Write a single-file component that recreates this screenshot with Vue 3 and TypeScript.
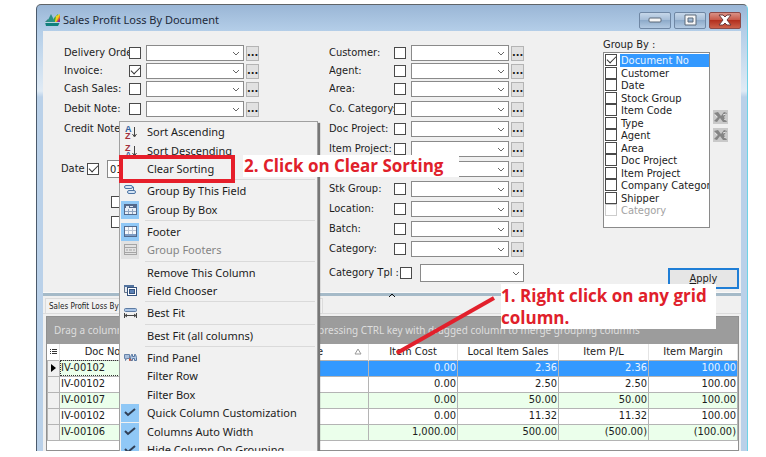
<script setup lang="ts">
interface Field {
  label: string
  checked?: boolean
}

interface MenuItem {
  text?: string
  icon?: string
  active?: boolean
  disabled?: boolean
}

interface Row {
  doc: string
  cost: string
  sales: string
  pl: string
  margin: string
}

const documentFields: Field[] = [
  { label: 'Delivery Order:' },
  { label: 'Invoice:', checked: true },
  { label: 'Cash Sales:' },
  { label: 'Debit Note:' },
  { label: 'Credit Note:' },
]

const filterFields: Field[] = [
  { label: 'Customer:' },
  { label: 'Agent:' },
  { label: 'Area:' },
  { label: 'Co. Category:' },
  { label: 'Doc Project:' },
  { label: 'Item Project:' },
  { label: 'Shipper:' },
  { label: 'Stk Group:' },
  { label: 'Location:' },
  { label: 'Batch:' },
  { label: 'Category:' },
]

const groups: string[] = [
  'Document No', 'Customer', 'Date', 'Stock Group', 'Item Code', 'Type', 'Agent',
  'Area', 'Doc Project', 'Item Project', 'Company Category', 'Shipper', 'Category',
]

// An entry without text is a separator.
const menu: MenuItem[] = [
  { text: 'Sort Ascending', icon: 'az' },
  { text: 'Sort Descending', icon: 'za' },
  { text: 'Clear Sorting' },
  {},
  { text: 'Group By This Field', icon: 'field' },
  { text: 'Group By Box', icon: 'box', active: true },
  {},
  { text: 'Footer', icon: 'footer', active: true },
  { text: 'Group Footers', icon: 'gfooter', disabled: true },
  {},
  { text: 'Remove This Column' },
  { text: 'Field Chooser', icon: 'chooser' },
  {},
  { text: 'Best Fit', icon: 'fit' },
  {},
  { text: 'Best Fit (all columns)' },
  {},
  { text: 'Find Panel', icon: 'find' },
  { text: 'Filter Row' },
  { text: 'Filter Box' },
  { text: 'Quick Column Customization', icon: 'check', active: true },
  { text: 'Columns Auto Width', icon: 'check', active: true },
  { text: 'Hide Column On Grouping', icon: 'check', active: true },
]

const rows: Row[] = [
  { doc: 'IV-00102', cost: '0.00', sales: '2.36', pl: '2.36', margin: '100.00' },
  { doc: 'IV-00102', cost: '0.00', sales: '2.50', pl: '2.50', margin: '100.00' },
  { doc: 'IV-00107', cost: '0.00', sales: '50.00', pl: '50.00', margin: '100.00' },
  { doc: 'IV-00102', cost: '0.00', sales: '11.32', pl: '11.32', margin: '100.00' },
  { doc: 'IV-00106', cost: '1,000.00', sales: '500.00', pl: '(500.00)', margin: '(100.00)' },
]
</script>

<template>
  <div class="desktop">
    <main class="window">
      <header class="titlebar">
        <svg class="logo" viewBox="0 0 16 12" aria-hidden="true">
          <path d="M0 8 3 5 6 8z" fill="#35827c" />
          <path d="M8 8 9 4l4-4 1 8z" fill="#3aa83c" />
          <path d="M10 8 11 2l4-2v8z" fill="#f0d020" />
          <path d="M11 8 15 1v7z" fill="#e0702a" />
          <path d="M12 8 15 4v4z" fill="#8a2aa0" />
          <path d="M2 8 6 0l4 8z" fill="#2b8f86" />
          <path d="M0 8h15l-2 4H1z" fill="#11807c" />
          <path d="M0 8.500h15" stroke="#b9d3e0" stroke-width="1" />
        </svg>
        <h1>Sales Profit Loss By Document</h1>
        <div class="controls">
          <button type="button" class="ctl" aria-label="Minimize">
            <svg viewBox="0 0 16 12"><rect x="2" y="4" width="12" height="4" rx="1" fill="#f6f6f6" stroke="#5b6878" /></svg>
          </button>
          <button type="button" class="ctl" aria-label="Maximize">
            <svg viewBox="0 0 16 12"><path d="M3 1h11v10H3z M6 4v4h5V4z" fill="#f6f6f6" fill-rule="evenodd" stroke="#5b6878" /></svg>
          </button>
          <button type="button" class="ctl close" aria-label="Close">
            <svg viewBox="0 0 16 12"><path d="M2 1h4l2 2 2-2h4l-4 5 4 5h-4L8 9l-2 2H2l4-5z" fill="#fff" stroke="#6b3a3c" /></svg>
          </button>
        </div>
      </header>

      <div class="client">
        <form class="filters" @submit.prevent>
          <div class="column">
            <div v-for="(f, i) in documentFields" :key="f.label" class="field" :class="{ spaced: i > 2 }">
              <label :for="'doc' + i">{{ f.label }}</label>
              <input :id="'doc' + i" type="checkbox" :checked="f.checked">
              <span class="combo">
                <select :aria-label="f.label"><option></option></select>
                <svg viewBox="0 0 8 5"><path d="M1 1l3 3 3-3" /></svg>
              </span>
              <button type="button" class="more">...</button>
            </div>
            <div class="date">
              <label for="date">Date</label>
              <input id="date" type="checkbox" checked>
              <input type="text" value="01/01/2017" aria-label="From date">
            </div>
            <div class="extras">
              <input type="checkbox" aria-label="Option one">
              <input type="checkbox" aria-label="Option two">
            </div>
          </div>

          <div class="column">
            <div v-for="(f, i) in filterFields" :key="f.label" class="field" :class="{ spaced: i > 2 }">
              <label :for="'flt' + i">{{ f.label }}</label>
              <input :id="'flt' + i" type="checkbox">
              <span class="combo">
                <select :aria-label="f.label"><option></option></select>
                <svg viewBox="0 0 8 5"><path d="M1 1l3 3 3-3" /></svg>
              </span>
              <button type="button" class="more">...</button>
            </div>
            <div class="field template">
              <label for="tpl">Category Tpl :</label>
              <input id="tpl" type="checkbox">
              <span class="combo">
                <select aria-label="Category template"><option></option></select>
                <svg viewBox="0 0 8 5"><path d="M1 1l3 3 3-3" /></svg>
              </span>
            </div>
          </div>

          <div class="grouping">
            <span class="caption">Group By :</span>
            <div class="picker">
              <ul>
                <li v-for="(g, i) in groups" :key="g">
                  <input :id="'grp' + i" type="checkbox" :checked="i === 0" :disabled="i === 12">
                  <label :for="'grp' + i" :class="{ selected: i === 0, off: i === 12 }">{{ g }}</label>
                </li>
              </ul>
              <div class="tools">
                <button v-for="n in 2" :key="n" type="button" :aria-label="n === 1 ? 'Check all' : 'Uncheck all'">
                  <svg viewBox="0 0 15 14">
                    <path d="M1 3l4-1 3 4 3-4 3 1-3 4 3 5-4 0-3-4-3 4-3-1 4-4z" fill="#858585" />
                    <path d="M2 5l2 2M11 9l2 1M10 5l3-1" stroke="#e4e4e4" />
                  </svg>
                </button>
              </div>
            </div>
            <button type="submit" class="apply"><u>A</u>pply</button>
          </div>
        </form>

        <div class="splitter">
          <svg viewBox="0 0 8 5"><path d="M1 4l3-3 3 3" /></svg>
        </div>

        <nav class="tabs">
          <button type="button" class="tab">Sales Profit Loss By Document</button>
        </nav>

        <section class="grid">
          <p class="groupbox">
            <span class="lead">Drag a column header here to group by that column or</span>
            <span>pressing CTRL key with dragged column to merge grouping columns</span>
          </p>
          <table>
            <colgroup>
              <col class="c-mark"><col class="c-doc"><col>
              <col class="c-cost"><col class="c-sales"><col class="c-pl"><col class="c-margin">
            </colgroup>
            <thead>
              <tr>
                <th>
                  <svg class="lines" viewBox="0 0 7 7"><path d="M0 1.500h1M2 1.500h5M0 3.500h1M2 3.500h5M0 5.500h1M2 5.500h5" /></svg>
                </th>
                <th>Doc No</th>
                <th class="name">
                  <span>Date</span>
                  <svg viewBox="0 0 8 7"><path d="M4 1l3 5H1z" /></svg>
                </th>
                <th>Item Cost</th>
                <th>Local Item Sales</th>
                <th>Item P/L</th>
                <th>Item Margin</th>
              </tr>
            </thead>
            <tbody>
              <tr v-for="(r, i) in rows" :key="i" :class="{ current: i === 0 }">
                <td class="mark"><svg v-if="i === 0" viewBox="0 0 5 8"><path d="M0 0l5 4-5 4z" /></svg></td>
                <td class="doc">{{ r.doc }}</td>
                <td></td>
                <td>{{ r.cost }}</td>
                <td>{{ r.sales }}</td>
                <td>{{ r.pl }}</td>
                <td>{{ r.margin }}</td>
              </tr>
            </tbody>
          </table>
        </section>
      </div>

      <div class="menu" role="menu">
        <template v-for="(m, i) in menu" :key="i">
          <hr v-if="!m.text">
          <button v-else type="button" role="menuitem" :disabled="m.disabled">
            <span class="glyph" :class="{ active: m.active, dim: m.disabled }">
              <svg v-if="m.icon === 'az' || m.icon === 'za'" viewBox="0 0 16 16">
                <text x="3" y="8" :fill="m.icon === 'az' ? '#2f5f9e' : '#a3303c'">{{ m.icon === 'az' ? 'A' : 'Z' }}</text>
                <text x="3" y="15" :fill="m.icon === 'az' ? '#a3303c' : '#2f5f9e'">{{ m.icon === 'az' ? 'Z' : 'A' }}</text>
                <path d="M12.500 3v9M10.500 10l2 3 2-3" fill="none" stroke="#444" />
              </svg>
              <svg v-else-if="m.icon === 'field'" viewBox="0 0 16 16" fill="#d5e5f6" stroke="#4c74a4">
                <rect x="2.500" y="2.500" width="8" height="3" rx="1.500" />
                <rect x="5.500" y="7.500" width="8" height="3" rx="1.500" />
                <path d="M10.500 4h1v3.500" fill="none" />
              </svg>
              <svg v-else-if="m.icon === 'box'" viewBox="0 0 16 16">
                <rect x="2.500" y="2.500" width="12" height="10" fill="#e9eff7" stroke="#53698c" />
                <path d="M3 3h11v3H3z" fill="#53698c" />
                <path d="M4 4h3v2H4zM8 4h3v1H8z" fill="#dfe9f5" />
                <path d="M3 9.500h11M6.500 7v5M10.500 7v5" stroke="#8fa3c0" />
              </svg>
              <svg v-else-if="m.icon === 'footer'" viewBox="0 0 16 16">
                <rect x="2.500" y="2.500" width="12" height="10" fill="#f7f9fc" stroke="#53698c" />
                <path d="M6.500 3v7M10.500 3v7M3 6.500h11" stroke="#b9c4d4" />
                <path d="M3 10h11v2H3z" fill="#7d9cc4" />
              </svg>
              <svg v-else-if="m.icon === 'gfooter'" viewBox="0 0 16 16" fill="none" stroke="#a5a5a5">
                <rect x="2.500" y="2.500" width="12" height="10" />
                <path d="M3 5.500h11M3 10.500h11M4 8h2M7 8h3M11 8h2" />
              </svg>
              <svg v-else-if="m.icon === 'chooser'" viewBox="0 0 16 16">
                <path d="M2.500 2.500h9v7h-9z" fill="#e6ebf2" stroke="#68778c" />
                <path d="M2 2h10v2H2z" fill="#54749f" />
                <rect x="5.500" y="4.500" width="9" height="8" fill="#fff" stroke="#36547f" />
                <rect x="7.500" y="6.500" width="5" height="4" fill="#5d82b5" stroke="#36547f" />
              </svg>
              <svg v-else-if="m.icon === 'fit'" viewBox="0 0 16 16">
                <rect x="2.500" y="3.500" width="12" height="3" rx="1" fill="#a9c4e6" stroke="#5d7ba3" />
                <path d="M2.500 8v5M14.500 8v5M3 10.500h11M5 9l-2 1.500L5 12M12 9l2 1.500-2 1.500" fill="none" stroke="#444" />
              </svg>
              <svg v-else-if="m.icon === 'find'" viewBox="0 0 16 16">
                <path d="M2.500 4.500h5v4h-3l-1 2v-2h-1z" fill="#a9bfdc" stroke="#6783a8" />
                <path d="M8.500 10.500v-3l1-3h1v2h2v-2h1l1 3v3h-2v-2h-2v2z" fill="#b8cce6" stroke="#5777a1" />
                <path d="M7 8l3 2-3 1z" fill="#c2563e" />
              </svg>
              <svg v-else-if="m.icon === 'check'" viewBox="0 0 16 16">
                <path d="M3 7l3 3 7-6" fill="none" stroke="#303f55" stroke-width="2" />
              </svg>
            </span>
            <span>{{ m.text }}</span>
          </button>
        </template>
      </div>

      <svg class="pointer" viewBox="0 0 100 60" aria-hidden="true"><path d="M98 3L1 58" /></svg>
      <div class="highlight"></div>
      <p class="note step-two">2. Click on Clear Sorting</p>
      <p class="note step-one">1. Right click on any grid column.</p>
    </main>
  </div>
</template>

<style>
body {
  margin: 0;
  background: #fff;
}
</style>

<style scoped>
* {
  box-sizing: border-box;
}

.desktop {
  height: 100vh;
  padding: 4px 18px 6px 36px;
  font: 11px/14px "DejaVu Sans Condensed", "DejaVu Sans", sans-serif;
  color: #1c1c1c;
}

button,
input,
select {
  margin: 0;
  padding: 0;
  font: inherit;
  color: inherit;
}

.window {
  position: relative;
  display: flex;
  flex-direction: column;
  height: 100%;
  overflow: hidden;
  border-top: 1px solid #5f6468;
  border-left: 1px solid #4a5a6c;
  border-right: 1px solid #6fd3e6;
  border-radius: 5px 5px 0 0;
  background: linear-gradient(#9ab6d6, #b4cee8 26px, #e0ebf5 86px, #bad1e9 92px);
}

.titlebar {
  display: flex;
  align-items: center;
  height: 26px;
  padding: 0 6px 0 8px;
}

.logo {
  width: 16px;
  height: 12px;
  margin-top: 4px;
}

h1 {
  flex: 1;
  margin: 4px 0 0 2px;
  font: 11px/16px "Noto Sans", sans-serif;
  color: #1d2a3a;
}

.controls {
  display: flex;
  gap: 3px;
  padding-top: 4px;
}

.ctl {
  display: grid;
  place-items: center;
  width: 32px;
  height: 17px;
  border: 1px solid #6f87a4;
  border-radius: 2px;
  background: linear-gradient(#c6d7e9, #a3bbd6 50%, #8eabca 50%, #b3cae2);
}

.ctl svg {
  width: 16px;
  height: 12px;
}

.close {
  border-color: #8c4a48;
  background: linear-gradient(#d99185, #c65443 50%, #b3301f 50%, #cb604a);
}

.client {
  display: flex;
  flex: 1;
  flex-direction: column;
  min-height: 0;
  margin: 0 6px;
  background: #f0f0f0;
}

.filters {
  display: grid;
  grid-template-columns: 265fr 274fr 136fr;
  padding: 14px 2px 3px 21px;
}

.column {
  display: flex;
  flex-direction: column;
  gap: 2px;
}

.field {
  display: flex;
  align-items: center;
  height: 16px;
}

.field.spaced {
  margin-top: 2px;
}

.field label {
  width: 65px;
  overflow: hidden;
  line-height: 16px;
  white-space: nowrap;
}

.combo {
  display: grid;
  align-items: center;
  width: 98px;
  height: 16px;
  margin: 0 2px 0 5px;
}

.combo select,
.combo svg {
  grid-area: 1 / 1;
}

.combo select {
  width: 100%;
  height: 100%;
  appearance: none;
  border: 1px solid #8a8a8a;
  border-radius: 0;
  background: #fff;
}

.combo svg {
  justify-self: end;
  width: 8px;
  height: 5px;
  margin-right: 4px;
  pointer-events: none;
}

.combo path {
  fill: none;
  stroke: #666;
}

.splitter path {
  fill: none;
  stroke: #111;
}

.more {
  width: 13px;
  height: 15px;
  border: 1px solid #b4b4b4;
  background: #e1e1e1;
  font-weight: 700;
  line-height: 12px;
  text-align: center;
}

input[type="checkbox"] {
  display: grid;
  place-items: center;
  flex: none;
  width: 12px;
  height: 12px;
  appearance: none;
  border: 1px solid #4a4a4a;
  background: #fff;
}

input[type="checkbox"]:checked::after {
  content: "";
  width: 8px;
  height: 4px;
  margin-bottom: 3px;
  border-bottom: 1px solid #333;
  border-left: 1px solid #333;
  transform: rotate(-45deg);
}

input[type="checkbox"]:disabled {
  border-color: #ccc;
}

.template {
  height: 18px;
  margin-top: 5px;
}

.template label {
  width: 71px;
}

.template .combo {
  width: 104px;
  height: 18px;
  margin-left: 8px;
}

.date {
  display: flex;
  align-items: center;
  height: 18px;
  margin: 21px 0 0 -3px;
}

.date label {
  width: 26px;
}

.date input[type="text"] {
  width: 80px;
  height: 18px;
  margin-left: 8px;
  padding-left: 2px;
  border: 1px solid #8a8a8a;
  background: #fff;
}

.extras {
  display: grid;
  gap: 8px;
  margin: 16px 0 0 47px;
}

.grouping {
  display: flex;
  flex-direction: column;
  margin-top: -8px;
}

.caption {
  line-height: 15px;
}

.picker {
  display: flex;
  gap: 3px;
}

.picker ul {
  width: 107px;
  height: 176px;
  margin: 0;
  padding: 1px 0 1px 1px;
  overflow: hidden;
  border: 1px solid #8a8a8a;
  background: #fff;
  list-style: none;
}

.picker li {
  display: grid;
  grid-template-columns: 12px 1fr;
  gap: 3px;
  height: 13px;
}

.picker li:nth-child(even) {
  height: 12px;
}

.picker li label {
  padding-left: 1px;
  overflow: hidden;
  line-height: 13px;
  white-space: nowrap;
}

.picker .selected {
  background: #3399ff;
  color: #e8f4ff;
}

.picker .off {
  color: #a2a2a2;
}

.tools {
  display: flex;
  flex-direction: column;
  gap: 4px;
  padding-top: 58px;
}

.tools button {
  display: block;
  width: 15px;
  height: 14px;
  border: 0;
  background: #c9c9c9;
}

.tools svg {
  display: block;
}

.apply {
  align-self: flex-end;
  width: 71px;
  height: 21px;
  margin-top: 40px;
  border: 2px solid #1f7ed6;
  background: #e6e6e6;
  line-height: 16px;
}

.splitter {
  display: grid;
  place-items: center;
  height: 4px;
  border-top: 1px solid #f9f9f9;
  background: #a5bac8;
}

.splitter svg {
  width: 8px;
  height: 5px;
}

.tabs {
  display: flex;
  height: 18px;
  padding: 2px 2px 0;
  border-bottom: 1px solid #dcdcdc;
}

.tab {
  width: 278px;
  border: 1px solid #dcdcdc;
  border-bottom: 0;
  background: #f2f2f2;
  padding: 2px 3px 0;
  font: 8px/12px "DejaVu Sans Condensed", sans-serif;
  text-align: left;
}

.grid {
  flex: 1;
  margin: 2px 2px 0 3px;
  border: 1px solid #909090;
  background: #fff;
}

.groupbox {
  display: flex;
  align-items: center;
  height: 27px;
  margin: 0;
  padding: 0 0 2px 7px;
  background: #9c9c9c;
  color: #dedede;
  font: 10px/14px "Noto Sans", sans-serif;
  white-space: nowrap;
}

.lead {
  width: 264px;
  overflow: hidden;
}

table {
  width: 100%;
  table-layout: fixed;
  border-collapse: collapse;
}

.c-mark { width: 12px; }
.c-doc { width: 86px; }
.c-cost { width: 89px; }
.c-sales { width: 101px; }
.c-pl { width: 90px; }
.c-margin { width: 89px; }

th {
  height: 16px;
  padding: 0;
  border-right: 1px solid #e4e4e4;
  font-weight: 400;
  text-align: center;
  white-space: nowrap;
}

.lines {
  display: block;
  width: 7px;
  height: 7px;
  margin: 0 auto;
  stroke: #333;
}

.name span {
  display: inline-block;
  margin-right: 31px;
}

.name {
  padding-right: 6px;
  text-align: right;
}

.name svg {
  width: 8px;
  height: 7px;
  fill: none;
  stroke: #999;
}

td {
  height: 16px;
  padding: 0 1px;
  border: 1px solid #b4b4b4;
  line-height: 14px;
  text-align: right;
}

tbody tr:nth-child(odd) {
  background: #ebffeb;
}

tbody tr.current {
  background: #3399ff;
  color: #e8f4ff;
}

td.mark {
  background: #f0f0f0;
}

.mark svg {
  display: block;
  width: 5px;
  height: 8px;
  margin: 0 auto;
}

td.doc {
  text-align: left;
}

tbody tr.current .doc {
  outline: 1px dotted #333;
  outline-offset: -1px;
  background: #ebffeb;
  color: #1c1c1c;
}

.menu {
  position: absolute;
  top: 116px;
  left: 82px;
  display: flex;
  flex-direction: column;
  width: 199px;
  height: 340px;
  padding: 1px;
  border: 1px solid #a0a0a0;
  background: #f1f1f1;
  box-shadow: 2px 2px 1px #777;
  font: 11px/16px "Noto Sans", sans-serif;
}

.menu button {
  display: flex;
  flex: 1;
  align-items: center;
  gap: 8px;
  min-height: 0;
  border: 0;
  background: none;
  text-align: left;
  white-space: nowrap;
}

.menu button:disabled {
  color: #858585;
}

.menu hr {
  width: 170px;
  height: 4px;
  margin: 0 0 0 24px;
  border: 0;
  background: linear-gradient(transparent 1px, #dadada 1px, #dadada 2px, transparent 2px);
}

.glyph {
  display: grid;
  place-items: center;
  flex: none;
  width: 18px;
  height: 18px;
}

.glyph.active {
  background: #90c8f6;
}

.glyph.dim {
  background: #e2e2e2;
}

.glyph svg {
  width: 16px;
  height: 16px;
}

.glyph text {
  font: bold 9px "Liberation Sans", sans-serif;
}

.pointer {
  position: absolute;
  top: 290px;
  left: 359px;
  width: 100px;
  height: 60px;
  fill: none;
  stroke: #e2202c;
  stroke-width: 4;
}

.highlight {
  position: absolute;
  top: 150px;
  left: 82px;
  width: 116px;
  height: 28px;
  border: 4px solid #e61e2a;
}

.note {
  position: absolute;
  margin: 0;
  background: #fff;
  color: #e0202a;
  font: bold 17px/22px "Open Sans", sans-serif;
}

.step-two {
  top: 150px;
  left: 206px;
  width: 216px;
  padding-left: 1px;
  white-space: nowrap;
}

.step-one {
  top: 279px;
  left: 464px;
  width: 215px;
  height: 45px;
  padding: 1px 0;
}
</style>
